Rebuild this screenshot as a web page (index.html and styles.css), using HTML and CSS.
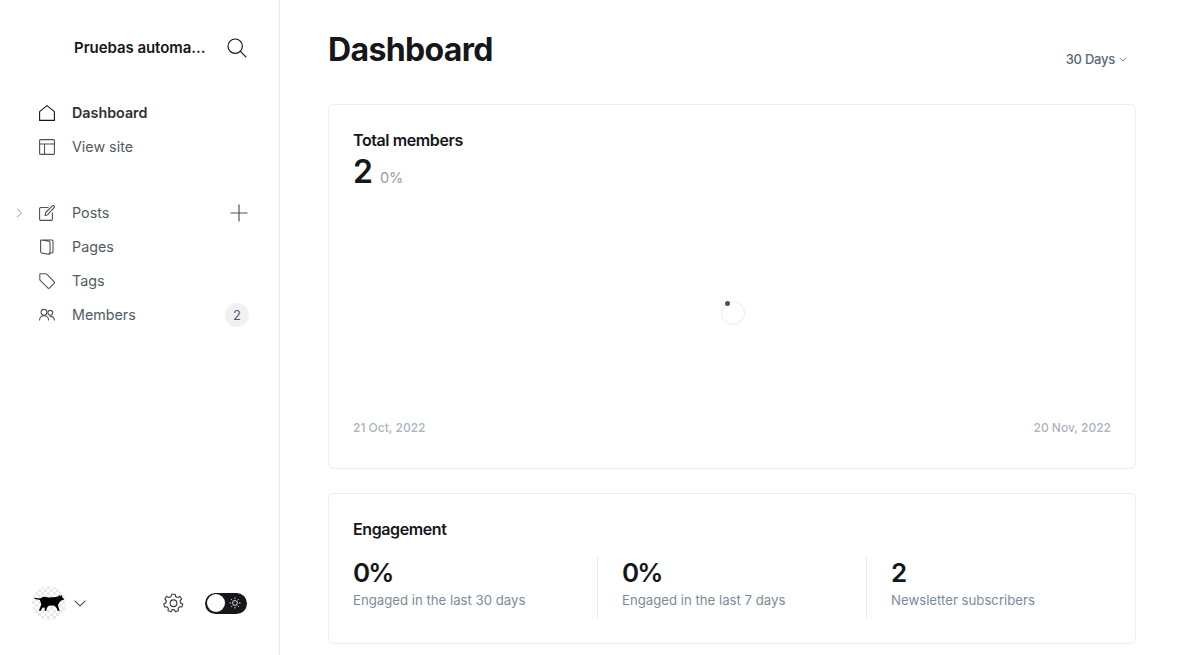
FILE: index.html
```html
<!DOCTYPE html>
<html lang="en">
<head>
<meta charset="utf-8">
<title>Dashboard</title>
<link rel="stylesheet" href="styles.css">
</head>
<body>
<div class="app">
  <aside class="sidebar">
    <div class="brand">
      <span class="brand-name">Pruebas automa...</span>
      <svg class="search" viewBox="0 0 20 20"><circle cx="8.2" cy="8.2" r="7.2"/><path d="M13.4 13.4 19.3 19.3"/></svg>
    </div>
    <nav class="nav nav-top">
      <a class="nav-item active">
        <svg class="ico dark" viewBox="0 0 16 16"><path d="M.6 6.6 8 .6l7.400 6v8.800H.6z"/></svg>
        <span>Dashboard</span>
      </a>
      <a class="nav-item">
        <svg class="ico" viewBox="0 0 16 16"><rect x=".6" y=".6" width="14.800" height="14.800" rx="1"/><path d="M.6 5h14.800M5.500 5v10.400"/></svg>
        <span>View site</span>
      </a>
    </nav>
    <nav class="nav nav-main">
      <a class="nav-item">
        <svg class="caret" viewBox="0 0 7 10"><path d="M1 .8 5.500 5 1 9.200"/></svg>
        <svg class="ico" viewBox="0 0 16 16"><path d="M9 2.500H1.800A1.200 1.200 0 0 0 .6 3.700v10.500a1.200 1.200 0 0 0 1.200 1.200h10.400a1.200 1.200 0 0 0 1.200-1.200V8M6 10.500l.7-3L13.300.9a1.300 1.300 0 0 1 1.800 0 1.300 1.300 0 0 1 0 1.800L8.700 9.700z"/></svg>
        <span>Posts</span>
        <svg class="plus" viewBox="0 0 18 18"><path d="M9 .5v17M.5 9h17"/></svg>
      </a>
      <a class="nav-item">
        <svg class="ico" viewBox="0 0 16 16"><path d="M2 1h11c.6 0 1 .4 1 1v11c0 .6-.4 1-1 1h-3M2 1l7.800 1.200c.7.100 1.200.6 1.200 1.300V14c0 1-.6 1.500-1.500 1.300l-6.500-1.200c-.8-.2-1.400-.8-1.400-1.600V1.500c0-.3.200-.5.400-.5z"/></svg>
        <span>Pages</span>
      </a>
      <a class="nav-item">
        <svg class="ico" viewBox="0 0 16 16"><path d="M1.500.8h5.200c.4 0 .7.100 1 .4l7.600 7.600c.4.400.4 1 0 1.400l-4.900 4.900c-.4.400-1 .4-1.400 0L1.200 7.300C.9 7 .8 6.700.8 6.300V1.500c0-.4.300-.7.700-.7z"/></svg>
        <span>Tags</span>
      </a>
      <a class="nav-item">
        <svg class="ico" viewBox="0 0 16 16"><circle cx="5" cy="5.300" r="2.900"/><circle cx="11.300" cy="5.800" r="2.400"/><path d="M.6 13c0-2.600 2-4.400 4.400-4.400S9.600 10.400 9.600 13M11 9.400c2.500-.2 4.400 1.300 4.400 3.600"/></svg>
        <span>Members</span>
        <span class="badge">2</span>
      </a>
    </nav>
    <div class="side-foot">
      <div class="user">
        <div class="avatar">
          <svg viewBox="0 0 32 18"><path d="M0 3 6 3.600 9.500 1.800 16 2.600 22.500 2.200 25 1.500 26.500 0 27.500 1 28.800 0 29.300 2.200 31.500 4.600 30.600 5.400 28.300 5.800 26.500 8 25 10.500 25.600 13.500 26.800 16.600 24.800 17 23.700 14 21 11 15 11.500 13 14 12.800 16.800 11 17 10.900 13.200 8.500 13.500 6.500 17 4.800 16.700 6.500 12.200 7.300 9.500 5.800 5.400 0 4z"/></svg>
        </div>
        <svg class="chev" viewBox="0 0 12 7"><path d="M.6.6 6 6l5.400-5.400"/></svg>
      </div>
      <div class="foot-actions">
        <svg class="gear" viewBox="0 0 20 20"><path d="M8.500 1.200h3l.6 2.300 1.700.8 2.200-1 1.700 2.300-1.400 1.900.4 1.900 2.100 1-.8 2.900-2.300-.2-1.300 1.500.3 2.300-2.800.9-1.200-2-1.900 0-1.200 2-2.800-.9.300-2.300L3.800 13.100l-2.300.2-.8-2.900 2.100-1 .4-1.900L1.800 5.600l1.700-2.300 2.200 1 1.700-.8z"/><circle cx="10" cy="9.800" r="3.200"/></svg>
        <div class="toggle">
          <span class="knob"></span>
          <svg class="sun" viewBox="0 0 12 12"><circle cx="6" cy="6" r="2.400"/><path d="M6 .5v1.600M6 9.900v1.600M.5 6h1.600M9.900 6h1.600M2.100 2.100l1.200 1.200M8.700 8.700l1.200 1.200M2.100 9.900l1.200-1.200M8.700 3.300l1.200-1.200"/></svg>
        </div>
      </div>
    </div>
  </aside>
  <main class="main">
    <header class="head">
      <h1>Dashboard</h1>
      <div class="range">
        <span>30 Days</span>
        <svg viewBox="0 0 8 5"><path d="M.7.7 4 4 7.300.7"/></svg>
      </div>
    </header>
    <section class="card chart-card">
      <h2>Total members</h2>
      <div class="metric"><strong>2</strong><span>0%</span></div>
      <div class="chart-area"><div class="spinner"></div></div>
      <div class="dates"><span>21 Oct, 2022</span><span>20 Nov, 2022</span></div>
    </section>
    <section class="card engage-card">
      <h2>Engagement</h2>
      <div class="stats">
        <div class="stat"><strong>0%</strong><span>Engaged in the last 30 days</span></div>
        <div class="stat"><strong>0%</strong><span>Engaged in the last 7 days</span></div>
        <div class="stat"><strong>2</strong><span>Newsletter subscribers</span></div>
      </div>
    </section>
  </main>
</div>
</body>
</html>
```

FILE: styles.css
```css
* { box-sizing: border-box; }
html, body { margin: 0; height: 100%; overflow: hidden; }
body { font-family: Inter, "Liberation Sans", sans-serif; color: #15171a; background: #fff; }
.app { display: flex; height: 655px; }

.sidebar {
  width: 280px; flex: none; border-right: 1px solid #e6e9eb;
  display: flex; flex-direction: column; padding: 0 32px;
}
.brand { display: flex; align-items: center; justify-content: space-between; height: 20px; margin-top: 38px; padding-left: 42px; }
.brand-name { font-size: 15px; font-weight: 600; letter-spacing: -.05px; color: #15171a; white-space: nowrap; margin-bottom: 2px; }
.search { width: 20px; height: 20px; fill: none; stroke: #15171a; stroke-width: 1.200; }

.nav { display: flex; flex-direction: column; }
.nav-top { margin-top: 38px; }
.nav-main { margin-top: 32px; }
.nav-item { display: flex; align-items: center; height: 34px; position: relative; font-size: 14.300px; color: #525b65; }
.nav-item > span { margin-bottom: 2px; }
.nav-item.active { font-weight: 600; color: #2d3238; }
.ico { width: 16px; height: 16px; margin: 0 17px 0 7px; flex: none; fill: none; stroke: #4a535c; stroke-width: 1.100; stroke-linejoin: round; stroke-linecap: round; }
.ico.dark { stroke: #15171a; }
.caret { position: absolute; left: -16px; top: 12px; width: 7px; height: 10px; fill: none; stroke: #8e9cac; stroke-width: 1; }
.plus { position: absolute; right: -1px; top: 8px; width: 18px; height: 18px; fill: none; stroke: #4a535c; stroke-width: 1.200; }
.nav-item > .badge {
  position: absolute; right: -2px; top: 5px; width: 24px; height: 24px; border-radius: 50%; margin: 0;
  background: #eff1f3; color: #525b65; font-size: 13px; display: flex; align-items: center; justify-content: center;
}

.side-foot { margin-top: auto; height: 34px; margin-bottom: 35px; display: flex; align-items: center; justify-content: space-between; }
.user { display: flex; align-items: center; gap: 8px; }
.avatar {
  width: 34px; height: 34px; border-radius: 50%; display: flex; align-items: center; justify-content: center;
  background-color: #fff;
  background-image: linear-gradient(45deg, #e9e9e9 25%, transparent 25%, transparent 75%, #e9e9e9 75%), linear-gradient(45deg, #e9e9e9 25%, transparent 25%, transparent 75%, #e9e9e9 75%);
  background-size: 6px 6px; background-position: 0 0, 3px 3px;
}
.avatar svg { width: 31px; height: 17px; fill: #000; flex: none; margin-left: 1px; }
.chev { width: 12px; height: 7px; fill: none; stroke: #4a535c; stroke-width: 1.100; }
.foot-actions { display: flex; align-items: center; gap: 21px; }
.gear { width: 21px; height: 21px; fill: none; stroke: #394047; stroke-width: 1.100; stroke-linejoin: round; }
.toggle { width: 42px; height: 21px; border-radius: 11px; background: #15171a; position: relative; display: flex; align-items: center; justify-content: flex-end; padding-right: 6px; }
.knob { position: absolute; left: 2px; top: 1.500px; width: 18px; height: 18px; border-radius: 50%; background: #fff; }
.sun { width: 12px; height: 12px; fill: none; stroke: #e6e9eb; stroke-width: .9; }

.main { flex: 1; min-width: 0; padding: 0 48px; }
.head { display: flex; justify-content: space-between; height: 104px; }
h1 { margin: 29px 0 0; font-size: 32px; line-height: 42px; font-weight: 700; letter-spacing: -.65px; color: #15171a; }
.range { display: flex; align-items: center; gap: 4px; height: 20px; margin: 49px 9px 0 0; font-size: 13px; font-weight: 500; letter-spacing: -.25px; color: #5d6772; }
.range svg { width: 8px; height: 5px; fill: none; stroke: #7c8b9a; stroke-width: 1; }

.card { border: 1px solid #ebeef0; border-radius: 6px; padding: 0 24px; background: #fff; }
h2 { margin: 0; font-size: 16px; line-height: 20px; font-weight: 600; letter-spacing: -.4px; color: #15171a; }
.chart-card { height: 365px; padding-top: 25px; display: flex; flex-direction: column; margin-bottom: 24px; }
.metric { display: flex; align-items: baseline; gap: 7px; height: 34px; margin-top: 5px; }
.metric strong { font-size: 32px; line-height: 34px; font-weight: 600; }
.metric span { font-size: 14.500px; color: #8e9cac; }
.chart-area { flex: 1; display: flex; align-items: center; justify-content: center; padding: 17px 0 0 2px; }
.spinner { width: 24px; height: 24px; border: 1.500px solid #e9ebed; border-radius: 50%; position: relative; }
.spinner::before { content: ""; position: absolute; left: 3px; top: -1px; width: 5px; height: 5px; border-radius: 50%; background: #4a535c; }
.dates { display: flex; justify-content: space-between; font-size: 12px; font-weight: 500; color: #abb4be; line-height: 16px; height: 48px; }

.engage-card { height: 151px; padding-top: 25px; }
.stats { display: grid; grid-template-columns: repeat(3, 1fr); margin-top: 17px; margin-right: -49px; }
.stat { display: flex; flex-direction: column; height: 63px; border-right: 1px solid #ebeef0; margin-right: 24px; }
.stat:last-child { border-right: 0; }
.stat strong { font-size: 26px; line-height: 34px; font-weight: 600; letter-spacing: -2px; color: #15171a; }
.stat span { font-size: 13.200px; line-height: 20px; color: #7c8b9a; }
```
